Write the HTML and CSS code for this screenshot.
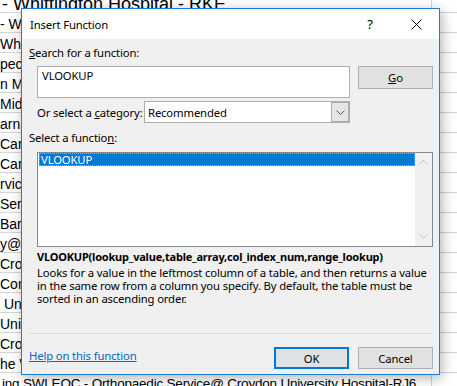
FILE: index.html
```html
<html>
<head>
<meta charset="utf-8">
<title>Insert Function</title>
<link rel="stylesheet" href="styles.css">
</head>
<body>
<div class="sheet">
  <div class="row first">- Whittington Hospital - RKE</div>
  <div class="row">- W</div>
  <div class="row">Whi</div>
  <div class="row">peci</div>
  <div class="row">n M</div>
  <div class="row">Mid</div>
  <div class="row">arn</div>
  <div class="row">Care</div>
  <div class="row">Care</div>
  <div class="row">rvic</div>
  <div class="row">Serv</div>
  <div class="row">Barr</div>
  <div class="row">y@</div>
  <div class="row">Croy</div>
  <div class="row">Cons</div>
  <div class="row">&nbsp;Un</div>
  <div class="row">Univ</div>
  <div class="row">Croy</div>
  <div class="row">he W</div>
  <div class="row last">ing SWLEOC - Orthopaedic Service@ Croydon University Hospital-RJ6</div>
</div>

<div class="dialog">
  <div class="titlebar">
    <span class="title">Insert Function</span>
    <span class="tb-btn help">?</span>
    <span class="tb-btn">
      <svg width="11" height="11" viewBox="0 0 11 11"><path d="M0.5 0.5 L10.5 10.5 M10.5 0.5 L0.5 10.5" stroke="#000" stroke-width="1" fill="none"/></svg>
    </span>
  </div>
  <div class="body">
    <div class="label"><u>S</u>earch for a function:</div>
    <div class="search-row">
      <div class="search">VLOOKUP</div>
      <div class="btn"><span><u>G</u>o</span></div>
    </div>
    <div class="category-row">
      <span class="cat-label">Or select a <u>c</u>ategory:</span>
      <div class="combo">
        <span class="combo-text">Recommended</span>
        <span class="combo-arrow">
          <svg width="9" height="5" viewBox="0 0 9 5"><path d="M0.5 0.5 L4.5 4.5 L8.5 0.5" stroke="#555" stroke-width="1" fill="none"/></svg>
        </span>
      </div>
    </div>
    <div class="label select-label">Select a functio<u>n</u>:</div>
    <div class="listbox">
      <div class="items">
        <div class="item selected">VLOOKUP</div>
      </div>
      <div class="scrollbar">
        <svg width="9" height="5" viewBox="0 0 9 5"><path d="M0.5 4.5 L4.5 0.5 L8.5 4.5" stroke="#c2c2c2" stroke-width="1" fill="none"/></svg>
        <svg width="9" height="5" viewBox="0 0 9 5"><path d="M0.5 0.5 L4.5 4.5 L8.5 0.5" stroke="#c2c2c2" stroke-width="1" fill="none"/></svg>
      </div>
    </div>
    <div class="sig">VLOOKUP(lookup_value,table_array,col_index_num,range_lookup)</div>
    <div class="desc">Looks for a value in the leftmost column of a table, and then returns a value in the same row from a column you specify. By default, the table must be sorted in an ascending order.</div>
    <div class="footer">
      <a class="help-link" href="#">Help on this function</a>
      <div class="buttons">
        <div class="btn default">OK</div>
        <div class="btn">Cancel</div>
      </div>
    </div>
  </div>
</div>
</body>
</html>
```
FILE: styles.css
```css
body {
  margin: 0;
  width: 457px;
  height: 386px;
  overflow: hidden;
  background: #fff;
  position: relative;
  font-family: "Liberation Sans", Arial, sans-serif;
}

/* spreadsheet behind the dialog */
.sheet {
  margin-top: -7px;
  background: linear-gradient(to right, transparent 431px, #d4d4d4 431px, #d4d4d4 432px, transparent 432px);
}
.row {
  height: 20px;
  box-sizing: border-box;
  border-bottom: 1px solid #d4d4d4;
  padding: 3px 0 0 0;
  font-size: 14px;
  line-height: 16px;
  white-space: nowrap;
  color: #000;
}
.row.first {
  font-size: 18px;
  padding-left: 2px;
}
.row.last {
  font-size: 13.5px;
  letter-spacing: -0.2px;
  padding-left: 2px;
}

/* the dialog window */
.dialog {
  position: absolute;
  left: 21px;
  top: 8px;
  width: 417px;
  height: 365px;
  border: 1px solid #1a7fd4;
  background: #f0f0f0;
  box-shadow: 2px 3px 12px rgba(0,0,0,0.3);
  display: flex;
  flex-direction: column;
  font-family: "Noto Sans", sans-serif;
  font-size: 11.3px;
  letter-spacing: -0.15px;
  color: #000;
}
.titlebar {
  height: 30px;
  background: #fff;
  display: flex;
  align-items: center;
}
.title {
  flex: 1;
  padding-left: 8px;
}
.tb-btn {
  width: 46px;
  height: 30px;
  display: flex;
  align-items: center;
  justify-content: center;
}
.help {
  font-size: 13px;
}
.body {
  flex: 1;
  display: flex;
  flex-direction: column;
  padding: 0 6px 0 7px;
}
.label {
  margin-top: 6px;
  line-height: 16px;
}
.select-label {
  margin-top: 7px;
}
.search-row {
  display: flex;
  gap: 8px;
  margin: 5px 0 0 8px;
}
.search {
  width: 313px;
  height: 32px;
  box-sizing: border-box;
  border: 1px solid #adadad;
  background: #fff;
  padding: 1px 4px;
  line-height: 16px;
}
.btn {
  width: 75px;
  height: 23px;
  box-sizing: border-box;
  border: 1px solid #adadad;
  background: #e1e1e1;
  display: flex;
  align-items: center;
  justify-content: center;
}
.category-row {
  display: flex;
  align-items: center;
  margin: 3px 0 0 8px;
}
.cat-label {
  flex: none;
  width: 107px;
  white-space: nowrap;
}
.combo {
  width: 206px;
  height: 22px;
  box-sizing: border-box;
  border: 1px solid #adadad;
  background: #fff;
  display: flex;
  align-items: center;
}
.combo-text {
  flex: 1;
  padding-left: 3px;
}
.combo-arrow {
  width: 18px;
  height: 20px;
  background: #e5e5e5;
  box-shadow: inset 0 0 0 1px #adadad;
  display: flex;
  align-items: center;
  justify-content: center;
}
.listbox {
  margin: 6px 0 0 8px;
  width: 396px;
  height: 95px;
  box-sizing: border-box;
  border: 1px solid #828790;
  background: #fff;
  display: flex;
}
.items {
  flex: 1;
  padding-left: 1px;
}
.item {
  height: 13px;
  line-height: 13px;
  padding-left: 2px;
}
.item.selected {
  background: #0078d7;
  color: #fff;
  outline: 1px dotted #f0a040;
  outline-offset: -1px;
}
.scrollbar {
  width: 17px;
  background: #f0f0f0;
  display: flex;
  flex-direction: column;
  justify-content: space-between;
  align-items: center;
  padding: 7px 0;
}
.sig {
  margin-top: 2px;
  padding-left: 8px;
  line-height: 15px;
  font-size: 11px;
  letter-spacing: -0.2px;
  font-weight: bold;
}
.desc {
  flex: 1;
  margin-top: 2px;
  padding-left: 8px;
  line-height: 13px;
}
.footer {
  border-top: 1px solid #dadada;
  display: flex;
  align-items: flex-start;
  padding: 13px 0 5px;
}
.help-link {
  margin-top: 1px;
  line-height: 16px;
  color: #0066cc;
}
.buttons {
  margin-left: auto;
  display: flex;
  gap: 9px;
}
.buttons .btn {
  height: 22px;
}
.btn.default {
  border: 2px solid #0078d7;
}
```
